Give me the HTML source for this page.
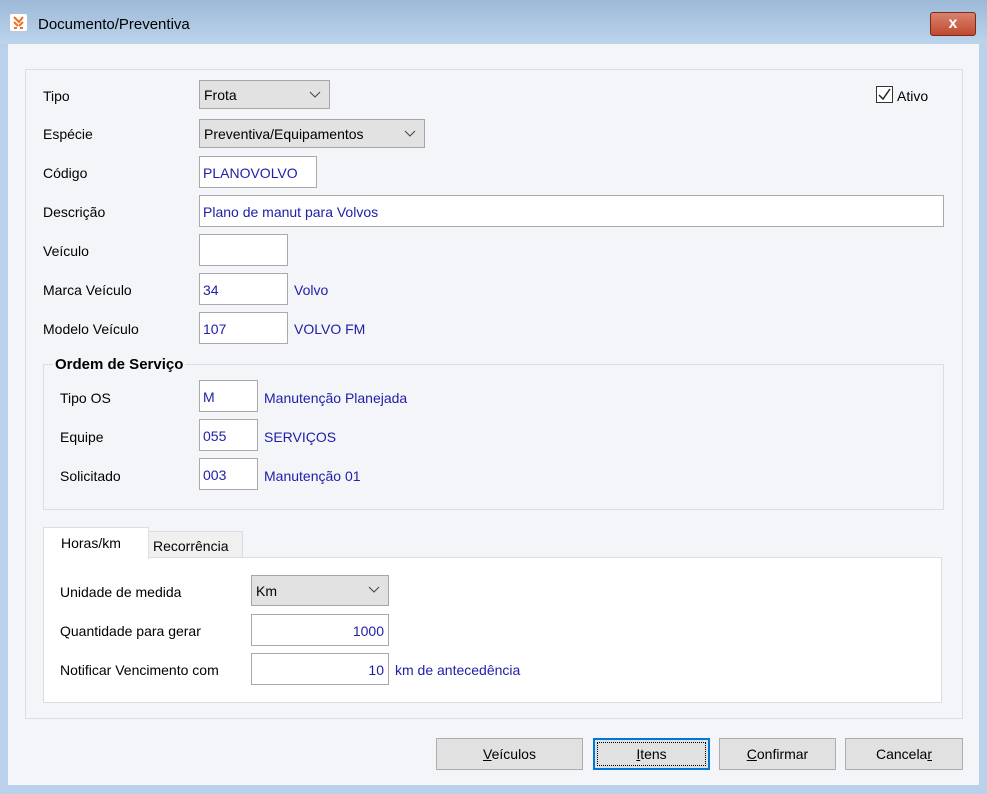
<!DOCTYPE html>
<html><head><meta charset="utf-8"><style>
*{margin:0;padding:0;box-sizing:border-box}
body{width:987px;height:794px;overflow:hidden;background:#b9d1ea;font-family:"Liberation Sans",sans-serif;font-size:14px;color:#000;position:relative}
.a{position:absolute}
.title{left:0;top:0;width:987px;height:44px;background:linear-gradient(#9db9d7,#bcd4ec)}
.client{left:8px;top:44px;width:971px;height:741px;background:#f4f5f9}
.panel{left:25px;top:69px;width:938px;height:650px;border:1px solid #dcdde2}
.lbl{white-space:nowrap;line-height:16px}
.in{background:#fff;border:1px solid #a9a9a9;color:#2020a8;padding-left:3px;line-height:33px;white-space:nowrap}
.cb{background:#e2e2e2;border:1px solid #a6a6a6;padding-left:4px;line-height:29px}
.cb svg{position:absolute;right:8px;top:10px}
.blue{color:#2020a8}
.btn{background:#e1e1e1;border:1px solid #adadad;text-align:center;line-height:30px;top:738px;height:32px}
</style></head><body>
<div class="a title"></div>
<div class="a" style="left:10px;top:14px;width:17px;height:17px;background:#fff;border-radius:2px"><svg width="17" height="17"><path d="M4 3 L9 8 L13 3 M4 8 L8 12 M13 8 L9 12 M4 14h3 M10 14h3" stroke="#f07020" stroke-width="2" fill="none"/></svg></div>
<div class="a lbl" style="left:38px;top:17px;font-size:15px">Documento/Preventiva</div>
<div class="a" style="left:930px;top:12px;width:46px;height:24px;background:linear-gradient(#d9826e,#c04a2e);border:1px solid #7a2a1a;border-radius:3px;color:#fff;font-weight:bold;text-align:center;line-height:21px;font-size:16px">x</div>
<div class="a client"></div>
<div class="a panel"></div>

<div class="a lbl" style="left:43px;top:88px">Tipo</div>
<div class="a cb" style="left:199px;top:80px;width:131px;height:29px">Frota<svg width="12" height="8"><path d="M1 1l5 5 5-5" stroke="#444" fill="none"/></svg></div>
<div class="a" style="left:876px;top:86px;width:17px;height:17px;border:1px solid #333;background:#fff"><svg width="15" height="15"><path d="M2 8l4 4 7-10" stroke="#222" stroke-width="1.5" fill="none"/></svg></div>
<div class="a lbl" style="left:897px;top:88px">Ativo</div>

<div class="a lbl" style="left:43px;top:126px">Espécie</div>
<div class="a cb" style="left:199px;top:119px;width:226px;height:29px">Preventiva/Equipamentos<svg width="12" height="8"><path d="M1 1l5 5 5-5" stroke="#444" fill="none"/></svg></div>

<div class="a lbl" style="left:43px;top:165px">Código</div>
<div class="a in" style="left:199px;top:156px;width:118px;height:32px">PLANOVOLVO</div>
<div class="a lbl" style="left:43px;top:204px">Descrição</div>
<div class="a in" style="left:199px;top:195px;width:745px;height:32px">Plano de manut para Volvos</div>
<div class="a lbl" style="left:43px;top:243px">Veículo</div>
<div class="a in" style="left:199px;top:234px;width:89px;height:32px"></div>
<div class="a lbl" style="left:43px;top:282px">Marca Veículo</div>
<div class="a in" style="left:199px;top:273px;width:89px;height:32px">34</div>
<div class="a lbl blue" style="left:294px;top:282px">Volvo</div>
<div class="a lbl" style="left:43px;top:321px">Modelo Veículo</div>
<div class="a in" style="left:199px;top:312px;width:89px;height:32px">107</div>
<div class="a lbl blue" style="left:294px;top:321px">VOLVO FM</div>

<div class="a" style="left:43px;top:364px;width:901px;height:146px;border:1px solid #dcdde2"></div>
<div class="a lbl" style="left:53px;top:357px;font-weight:bold;background:#f4f5f9;padding:0 2px;font-size:15px">Ordem de Serviço</div>
<div class="a lbl" style="left:60px;top:390px">Tipo OS</div>
<div class="a in" style="left:199px;top:380px;width:59px;height:32px">M</div>
<div class="a lbl blue" style="left:264px;top:390px">Manutenção Planejada</div>
<div class="a lbl" style="left:60px;top:429px">Equipe</div>
<div class="a in" style="left:199px;top:419px;width:59px;height:32px">055</div>
<div class="a lbl blue" style="left:264px;top:429px">SERVIÇOS</div>
<div class="a lbl" style="left:60px;top:468px">Solicitado</div>
<div class="a in" style="left:199px;top:458px;width:59px;height:32px">003</div>
<div class="a lbl blue" style="left:264px;top:468px">Manutenção 01</div>

<div class="a" style="left:43px;top:557px;width:899px;height:146px;background:#fff;border:1px solid #dcdde2"></div>
<div class="a" style="left:148px;top:531px;width:95px;height:27px;background:#f0f0f0;border:1px solid #dcdde2"></div>
<div class="a lbl" style="left:153px;top:538px">Recorrência</div>
<div class="a" style="left:43px;top:527px;width:106px;height:32px;background:#fff;border:1px solid #dcdde2;border-bottom:none"></div>
<div class="a lbl" style="left:61px;top:535px">Horas/km</div>

<div class="a lbl" style="left:60px;top:584px">Unidade de medida</div>
<div class="a cb" style="left:251px;top:575px;width:138px;height:31px;line-height:31px">Km<svg width="12" height="8"><path d="M1 1l5 5 5-5" stroke="#444" fill="none"/></svg></div>
<div class="a lbl" style="left:60px;top:623px">Quantidade para gerar</div>
<div class="a in" style="left:251px;top:614px;width:138px;height:32px;text-align:right;padding-right:4px">1000</div>
<div class="a lbl" style="left:60px;top:662px">Notificar Vencimento com</div>
<div class="a in" style="left:251px;top:653px;width:138px;height:32px;text-align:right;padding-right:4px">10</div>
<div class="a lbl blue" style="left:395px;top:662px">km de antecedência</div>

<div class="a btn" style="left:436px;width:147px"><u>V</u>eículos</div>
<div class="a btn" style="left:593px;width:117px;border:2px solid #0078d7"><div style="position:absolute;left:2px;top:2px;right:2px;bottom:2px;border:1px dotted #000"></div><span style="position:relative;top:-1px"><u>I</u>tens</span></div>
<div class="a btn" style="left:719px;width:117px"><u>C</u>onfirmar</div>
<div class="a btn" style="left:845px;width:118px">Cancela<u>r</u></div>
</body></html>
